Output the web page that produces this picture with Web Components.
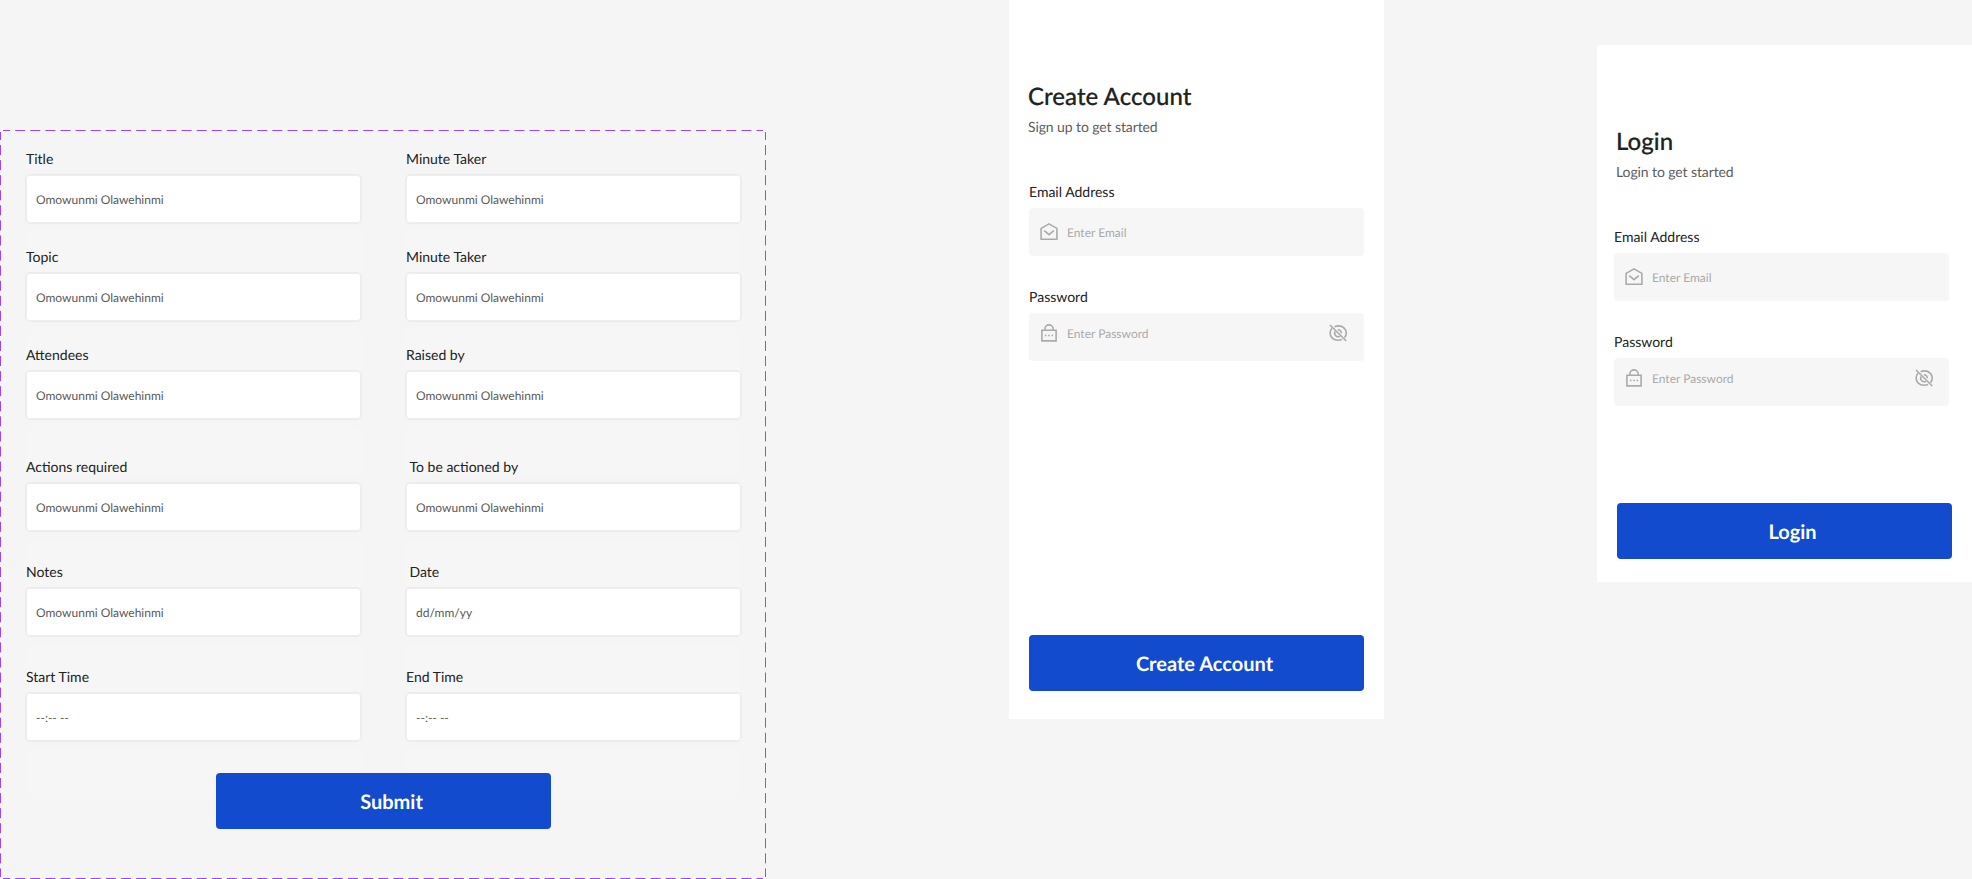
<!DOCTYPE html>
<html lang="en">
<head>
<meta charset="utf-8">
<title>Minutes forms</title>
<style>
html,body{margin:0;height:100%;overflow:hidden;background:#f5f5f5}
body{font-family:Lato,"Open Sans",sans-serif;text-rendering:geometricPrecision}
</style>
</head>
<body>
<design-board></design-board>

<template id="t-board">
<style>
:host{display:flex;align-items:flex-start;width:1972px;height:879px;overflow:hidden;background:#f5f5f5}
minutes-form,auth-card{flex:none}
.create{margin-left:243px;height:719px;--field-x:20px;--btn-top:273px;--btn-x:20px;--eye-gap:16px}
.login{margin-left:213px;margin-top:45px;height:537px;--field-x:17px;--btn-top:96px;--btn-x:20px;--eye-gap:15px}
</style>
<minutes-form></minutes-form>
<auth-card class="create" heading="Create Account" sub="Sign up to get started"></auth-card>
<auth-card class="login" heading="Login" sub="Login to get started"></auth-card>
</template>

<template id="t-form">
<style>
:host{display:block;position:relative;isolation:isolate;width:766px;height:749px;margin-top:130px;box-sizing:border-box;padding:20px 25px 0 26px}
.frame{position:absolute;inset:0;width:766px;height:749px;fill:none;stroke:#9747ff;stroke-width:1}
.grid{position:relative;display:grid;grid-template-columns:335px 335px;column-gap:45px}
.r1,.r2{margin-bottom:25px}.r3{margin-bottom:39px}.r4,.r5{margin-bottom:32px}
.r1{--ghost:79px}.r2,.r3,.r6{--ghost:81px}.r4,.r5{--ghost:82px}
.in{--label-x:3.5px}
action-button{position:relative;margin:32px 0 0 190px}
</style>
<svg class="frame" viewBox="0 0 766 749">
<path d="M3 .5H763M3 748.5H763" stroke-dasharray="10 5.13" stroke-dashoffset="3"/>
<path d="M.5 2V747M765.5 2V747" stroke-dasharray="10 5.07" stroke-dashoffset="2"/>
</svg>
<div class="grid">
<text-field class="r1" label="Title">Omowunmi Olawehinmi</text-field>
<text-field class="r1" label="Minute Taker">Omowunmi Olawehinmi</text-field>
<text-field class="r2" label="Topic">Omowunmi Olawehinmi</text-field>
<text-field class="r2" label="Minute Taker">Omowunmi Olawehinmi</text-field>
<text-field class="r3" label="Attendees">Omowunmi Olawehinmi</text-field>
<text-field class="r3" label="Raised by">Omowunmi Olawehinmi</text-field>
<text-field class="r4" label="Actions required">Omowunmi Olawehinmi</text-field>
<text-field class="r4 in" label="To be actioned by">Omowunmi Olawehinmi</text-field>
<text-field class="r5" label="Notes">Omowunmi Olawehinmi</text-field>
<text-field class="r5 in" label="Date">dd/mm/yy</text-field>
<text-field class="r6" label="Start Time">--:-- --</text-field>
<text-field class="r6" label="End Time">--:-- --</text-field>
</div>
<action-button>Submit</action-button>
</template>

<template id="t-text">
<style>
:host{display:block;position:relative;height:73px}
.ghost{position:absolute;z-index:-1;left:0;top:var(--ghost);width:335px;height:48px;border-radius:4px;background:#f6f6f6}
.label{display:block;font-size:14px;line-height:17px;color:#222;margin:0 0 8px var(--label-x,0)}
.box{box-sizing:border-box;height:48px;border-radius:4px;background:#fff;box-shadow:0 0 0 1px #ebebeb,inset 0 0 0 1px #eee;padding:1px 10px 0;display:flex;align-items:center;font-size:12px;line-height:16px;color:#5a5a5a}
</style>
<div class="ghost"></div>
<span class="label"></span>
<div class="box"><span><slot></slot></span></div>
</template>

<template id="t-button">
<style>
:host{display:flex;align-items:center;justify-content:center;box-sizing:border-box;width:335px;height:56px;padding:2px 0 0 16px;border-radius:4px;background:#124bce;color:#fff;font-size:20px;line-height:24px;font-weight:700}
</style>
<slot></slot>
</template>

<template id="t-card">
<style>
:host{display:block;box-sizing:border-box;width:375px;padding-top:82px;background:#fff}
h1{margin:0 0 0 19px;font-size:24px;line-height:30px;font-weight:500;color:#222;letter-spacing:.03px;-webkit-text-stroke:.2px #222}
p{margin:6px 0 0 19px;font-size:14px;line-height:17px;color:#5c5c5c;letter-spacing:-.1px}
icon-field{margin-left:var(--field-x)}
.e{margin-top:48px}.p{margin-top:32px}
action-button{margin:calc(var(--btn-top) + 1px) 0 0 var(--btn-x)}
</style>
<h1></h1><p></p>
<icon-field class="e" label="Email Address" icon="mail">Enter Email</icon-field>
<icon-field class="p" label="Password" icon="lock" reveal>Enter Password</icon-field>
<action-button></action-button>
</template>

<template id="t-icon">
<style>
:host{display:block;width:335px}
.label{display:block;font-size:14px;line-height:17px;color:#222;margin:0 0 8px}
.box{display:flex;align-items:flex-start;box-sizing:border-box;height:48px;border-radius:4px;background:#f6f6f6;padding:14px var(--eye-gap,16px) 0 10px;color:#aaa;font-size:12px;line-height:15px}
:host([reveal]) .box{padding-top:10px}
.box>span{margin:3px auto 0 8px}
svg{display:block;width:20px;height:20px;fill:none;stroke:#aaa;stroke-width:1.6;flex:none}
</style>
<span class="label"></span>
<div class="box"></div>
</template>

<script>
const icons={
mail:'<svg viewBox="0 0 20 20"><path d="M2.1 6.4 10 1.9l7.9 4.5v10.9H2.1Z"/><path d="m5.2 8.6 4.8 4 4.8-4"/></svg>',
lock:'<svg viewBox="0 0 20 20"><path d="M2.9 7.2h14.2v10.7H2.9ZM5.9 7.2V6a4.1 4.1 0 0 1 8.2 0v1.2"/><path d="M5.9 12.5h1.6M9.2 12.5h1.6M12.5 12.5h1.6"/></svg>',
eye:'<svg viewBox="0 0 20 20"><path d="M6.6 3.9Q8.2 2.9 10.2 2.9C15.4 2.9 18.3 6.4 18.3 10q0 2.7-1.8 4.6M14 16.6Q12.3 17.3 10.2 17.3C5 17.3 2.1 13.8 2.1 10.1Q2.1 7.3 4 5.3"/><path d="M7.2 8.5a3.4 3.4 0 0 0 4.8 4.6M9.8 6.8a3.4 3.4 0 0 1 3.6 3.5"/><path d="m2 2 16.2 16"/></svg>'
};
class Base extends HTMLElement{
  constructor(id){super();this.attachShadow({mode:'open'}).append(document.getElementById(id).content.cloneNode(true));}
  $(s){return this.shadowRoot.querySelector(s);}
}
customElements.define('action-button',class extends Base{constructor(){super('t-button')}});
customElements.define('text-field',class extends Base{
  constructor(){super('t-text')}
  connectedCallback(){this.$('.label').textContent=this.getAttribute('label')}
});
customElements.define('icon-field',class extends Base{
  constructor(){super('t-icon')}
  connectedCallback(){
    this.$('.label').textContent=this.getAttribute('label');
    this.$('.box').innerHTML=icons[this.getAttribute('icon')]+'<span><slot></slot></span>'+(this.hasAttribute('reveal')?icons.eye:'');
  }
});
customElements.define('auth-card',class extends Base{
  constructor(){super('t-card')}
  connectedCallback(){
    this.$('h1').textContent=this.getAttribute('heading');
    this.$('p').textContent=this.getAttribute('sub');
    this.$('action-button').textContent=this.getAttribute('heading');
  }
});
customElements.define('minutes-form',class extends Base{constructor(){super('t-form')}});
customElements.define('design-board',class extends Base{constructor(){super('t-board')}});
</script>
</body>
</html>
